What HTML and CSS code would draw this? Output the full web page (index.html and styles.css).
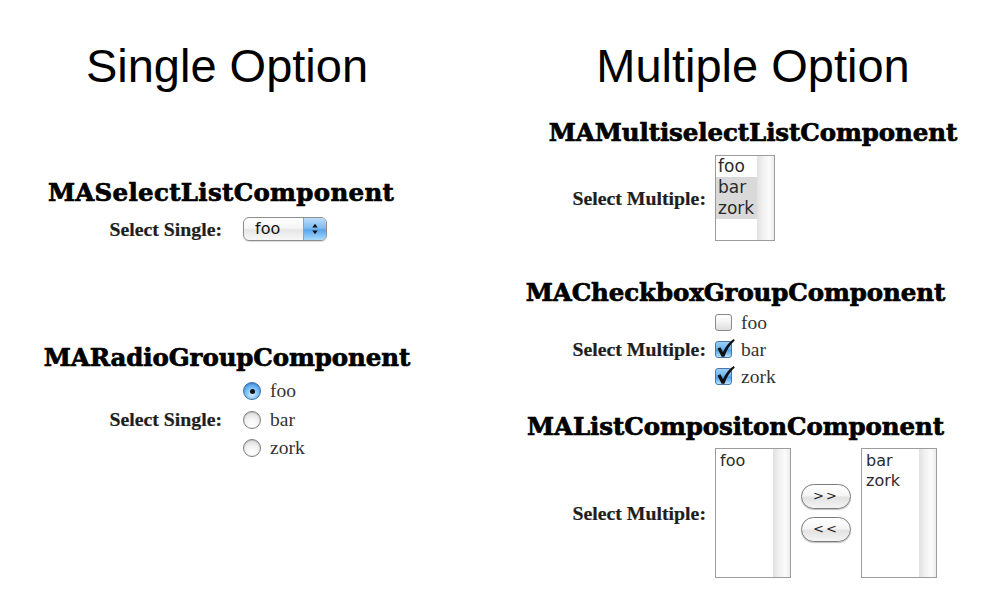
FILE: index.html
```html
<!DOCTYPE html>
<html>
<head>
<meta charset="utf-8">
<title>Option Components</title>
<link rel="stylesheet" href="styles.css">
</head>
<body>
<div class="page">
  <section class="col col-left">
    <h1 class="title">Single Option</h1>

    <div class="comp comp-select">
      <h2 class="comp-title comp-title-select">MASelectListComponent</h2>
      <div class="row">
        <div class="label">Select Single:</div>
        <div class="control">
          <div class="popup">
            <span class="popup-text">foo</span>
            <span class="popup-arrows">
              <svg width="22" height="24" viewBox="0 0 22 24">
                <path d="M8.3 10.6 L11 6.8 L13.7 10.6 Z" fill="#111"/>
                <path d="M8.3 13.4 L11 17.2 L13.7 13.4 Z" fill="#111"/>
              </svg>
            </span>
          </div>
        </div>
      </div>
    </div>

    <div class="comp comp-radio">
      <h2 class="comp-title">MARadioGroupComponent</h2>
      <div class="row">
        <div class="label">Select Single:</div>
        <div class="control choices">
          <div class="choice"><span class="radio radio-on"><span class="radio-dot"></span></span><span class="choice-text">foo</span></div>
          <div class="choice"><span class="radio"></span><span class="choice-text">bar</span></div>
          <div class="choice"><span class="radio"></span><span class="choice-text">zork</span></div>
        </div>
      </div>
    </div>
  </section>

  <section class="col col-right">
    <h1 class="title">Multiple Option</h1>

    <div class="comp comp-multi">
      <h2 class="comp-title">MAMultiselectListComponent</h2>
      <div class="row">
        <div class="label">Select Multiple:</div>
        <div class="control">
          <div class="listbox listbox-small">
            <div class="list-items">
              <div class="item">foo</div>
              <div class="item selected">bar</div>
              <div class="item selected">zork</div>
            </div>
            <div class="scroll"></div>
          </div>
        </div>
      </div>
    </div>

    <div class="comp comp-check">
      <h2 class="comp-title comp-title-shift">MACheckboxGroupComponent</h2>
      <div class="row">
        <div class="label">Select Multiple:</div>
        <div class="control choices choices-check">
          <div class="choice"><span class="check"></span><span class="choice-text">foo</span></div>
          <div class="choice"><span class="check check-on"><svg class="tick" width="22" height="22" viewBox="0 0 22 22"><path d="M2.5 10.5 L5.4 9.2 L8 14 C10.5 8.6 13.8 4.2 18.8 1 L19.8 2.4 C15.2 6.4 11.8 11.6 9.4 18.8 L6.6 18.8 Z" fill="#111"/></svg></span><span class="choice-text">bar</span></div>
          <div class="choice"><span class="check check-on"><svg class="tick" width="22" height="22" viewBox="0 0 22 22"><path d="M2.5 10.5 L5.4 9.2 L8 14 C10.5 8.6 13.8 4.2 18.8 1 L19.8 2.4 C15.2 6.4 11.8 11.6 9.4 18.8 L6.6 18.8 Z" fill="#111"/></svg></span><span class="choice-text">zork</span></div>
        </div>
      </div>
    </div>

    <div class="comp comp-compose">
      <h2 class="comp-title comp-title-shift">MAListCompositonComponent</h2>
      <div class="row">
        <div class="label">Select Multiple:</div>
        <div class="control compose">
          <div class="listbox listbox-tall">
            <div class="list-items list-items-pad">
              <div class="item">foo</div>
            </div>
            <div class="scroll"></div>
          </div>
          <div class="buttons">
            <div class="pill">&gt;&gt;</div>
            <div class="pill">&lt;&lt;</div>
          </div>
          <div class="listbox listbox-tall">
            <div class="list-items list-items-pad">
              <div class="item">bar</div>
              <div class="item">zork</div>
            </div>
            <div class="scroll"></div>
          </div>
        </div>
      </div>
    </div>
  </section>
</div>
</body>
</html>
```

FILE: styles.css
```css
html, body {
  margin: 0;
  padding: 0;
  background: #ffffff;
}

.page {
  display: flex;
  width: 999px;
  height: 606px;
  overflow: hidden;
}

.col {
  display: flex;
  flex-direction: column;
}

.col-left {
  width: 454px;
  --lw: 222px;
  --gap: 21px;
}

.col-right {
  width: 492px;
  margin-left: 53px;
  --lw: 199px;
  --gap: 9px;
}

.title {
  margin: 42px 0 0 0;
  font-family: "Liberation Sans", Arial, sans-serif;
  font-weight: normal;
  font-size: 47px;
  line-height: 47px;
  text-align: center;
  color: #000;
}

.comp-title {
  margin: 0;
  font-family: "DejaVu Serif", "Liberation Serif", serif;
  font-weight: bold;
  font-size: 24.5px;
  line-height: 26px;
  text-align: center;
  color: #000;
  letter-spacing: -0.1px;
  -webkit-text-stroke: 0.7px #000;
}

.comp-title-select {
  padding-right: 12px;
  letter-spacing: 0.3px;
}

.comp-title-shift {
  padding-right: 35px;
}

.row {
  display: grid;
  grid-template-columns: var(--lw) auto;
  column-gap: var(--gap);
  align-items: center;
}

.label {
  text-align: right;
  font-family: "Liberation Serif", "Times New Roman", serif;
  font-weight: bold;
  font-size: 19.8px;
  color: #1e1e1e;
  -webkit-text-stroke: 0.2px #1e1e1e;
}

.control {
  display: flex;
}

/* vertical rhythm */
.comp-select { margin-top: 91px; }
.comp-select .row { margin-top: 11px; }
.comp-radio { margin-top: 104px; }
.comp-radio .row { margin-top: 6px; }

.comp-multi { margin-top: 31px; }
.comp-multi .row { margin-top: 9px; }
.comp-check { margin-top: 39px; }
.comp-check .row { margin-top: 3px; }
.comp-compose { margin-top: 24px; }
.comp-compose .row { margin-top: 8px; }

/* popup */
.popup {
  display: flex;
  width: 84px;
  height: 24px;
  box-sizing: border-box;
  border: 1px solid #8d8d8d;
  border-radius: 6px;
  overflow: hidden;
  background: linear-gradient(to bottom, #ffffff 0%, #f6f6f6 45%, #e6e6e6 55%, #f8f8f8 100%);
  box-shadow: 0 1px 1px rgba(0,0,0,0.15);
}

.popup-text {
  flex: 1;
  padding-left: 11px;
  font-family: "DejaVu Sans", "Lucida Grande", sans-serif;
  font-size: 16px;
  line-height: 22px;
  color: #111;
}

.popup-arrows {
  width: 22px;
  display: flex;
  align-items: center;
  justify-content: center;
  border-left: 1px solid #7aa6d8;
  background: linear-gradient(to bottom, #bcdcf8 0%, #7fbdf2 45%, #5aa6ec 55%, #a6dafc 100%);
}

.popup-arrows svg {
  display: block;
  margin-top: -1px;
}

/* choices */
.choices {
  flex-direction: column;
}

.choice {
  display: flex;
  align-items: center;
  height: 28.5px;
}

.choices-check .choice {
  height: 27px;
}

.choice-text {
  margin-left: 9px;
  font-family: "Liberation Serif", "Times New Roman", serif;
  font-size: 19.5px;
  color: #333;
}

.radio {
  position: relative;
  width: 18px;
  height: 18px;
  box-sizing: border-box;
  border-radius: 50%;
  border: 1px solid #7e7e7e;
  background: radial-gradient(circle at 50% 75%, #ffffff 0%, #f4f4f4 40%, #d2d2d2 100%);
  box-shadow: inset 0 1px 1px rgba(0,0,0,0.12);
}

.radio-on {
  border-color: #3d6fae;
  background: radial-gradient(circle at 50% 70%, #d8f0ff 0%, #7cc0f7 45%, #2f7fd8 100%);
}

.radio-dot {
  position: absolute;
  left: 50%;
  top: 50%;
  width: 5px;
  height: 5px;
  margin: -2.5px 0 0 -2.5px;
  border-radius: 50%;
  background: #111;
}

.check {
  position: relative;
  width: 17px;
  height: 17px;
  box-sizing: border-box;
  border: 1px solid #8a8a8a;
  border-radius: 3px;
  background: linear-gradient(to bottom, #ffffff 0%, #f2f2f2 50%, #dedede 100%);
}

.check-on {
  border-color: #4a77ad;
  background: linear-gradient(to bottom, #9ccff8 0%, #6db6f3 45%, #4aa1ee 55%, #b8e2fd 100%);
}

.tick {
  position: absolute;
  left: -1px;
  top: -4px;
}

/* listboxes */
.listbox {
  display: flex;
  box-sizing: border-box;
  border: 1px solid #9c9c9c;
  background: #fff;
}

.listbox-small {
  width: 60px;
  height: 86px;
}

.listbox-tall {
  width: 76px;
  height: 130px;
}

.list-items {
  flex: 1;
  display: flex;
  flex-direction: column;
}

.list-items-pad {
  padding-top: 2px;
}

.item {
  padding-left: 2px;
  font-family: "DejaVu Sans", "Lucida Grande", sans-serif;
  font-size: 17px;
  line-height: 21px;
  height: 21px;
  color: #2a2a2a;
}

.list-items-pad .item {
  padding-left: 4px;
  height: 20px;
  line-height: 20px;
  font-size: 16px;
}

.item.selected {
  background: #d9d9d9;
}

.scroll {
  width: 16px;
  border-left: 1px solid #e2e2e2;
  background: linear-gradient(to right, #e4e4e4 0%, #f2f2f2 35%, #fbfbfb 70%, #ececec 100%);
}

/* composition */
.compose {
  align-items: center;
}

.buttons {
  display: flex;
  flex-direction: column;
  gap: 8px;
  margin: 0 10px;
}

.pill {
  width: 50px;
  height: 25px;
  box-sizing: border-box;
  border: 1px solid #7c7c7c;
  border-radius: 13px;
  background: linear-gradient(to bottom, #ffffff 0%, #f5f5f5 45%, #e2e2e2 55%, #f4f4f4 100%);
  box-shadow: 0 1px 1px rgba(0,0,0,0.25);
  font-family: "DejaVu Sans", "Lucida Grande", sans-serif;
  font-size: 13px;
  line-height: 22px;
  text-align: center;
  letter-spacing: 2px;
  color: #222;
}
```
